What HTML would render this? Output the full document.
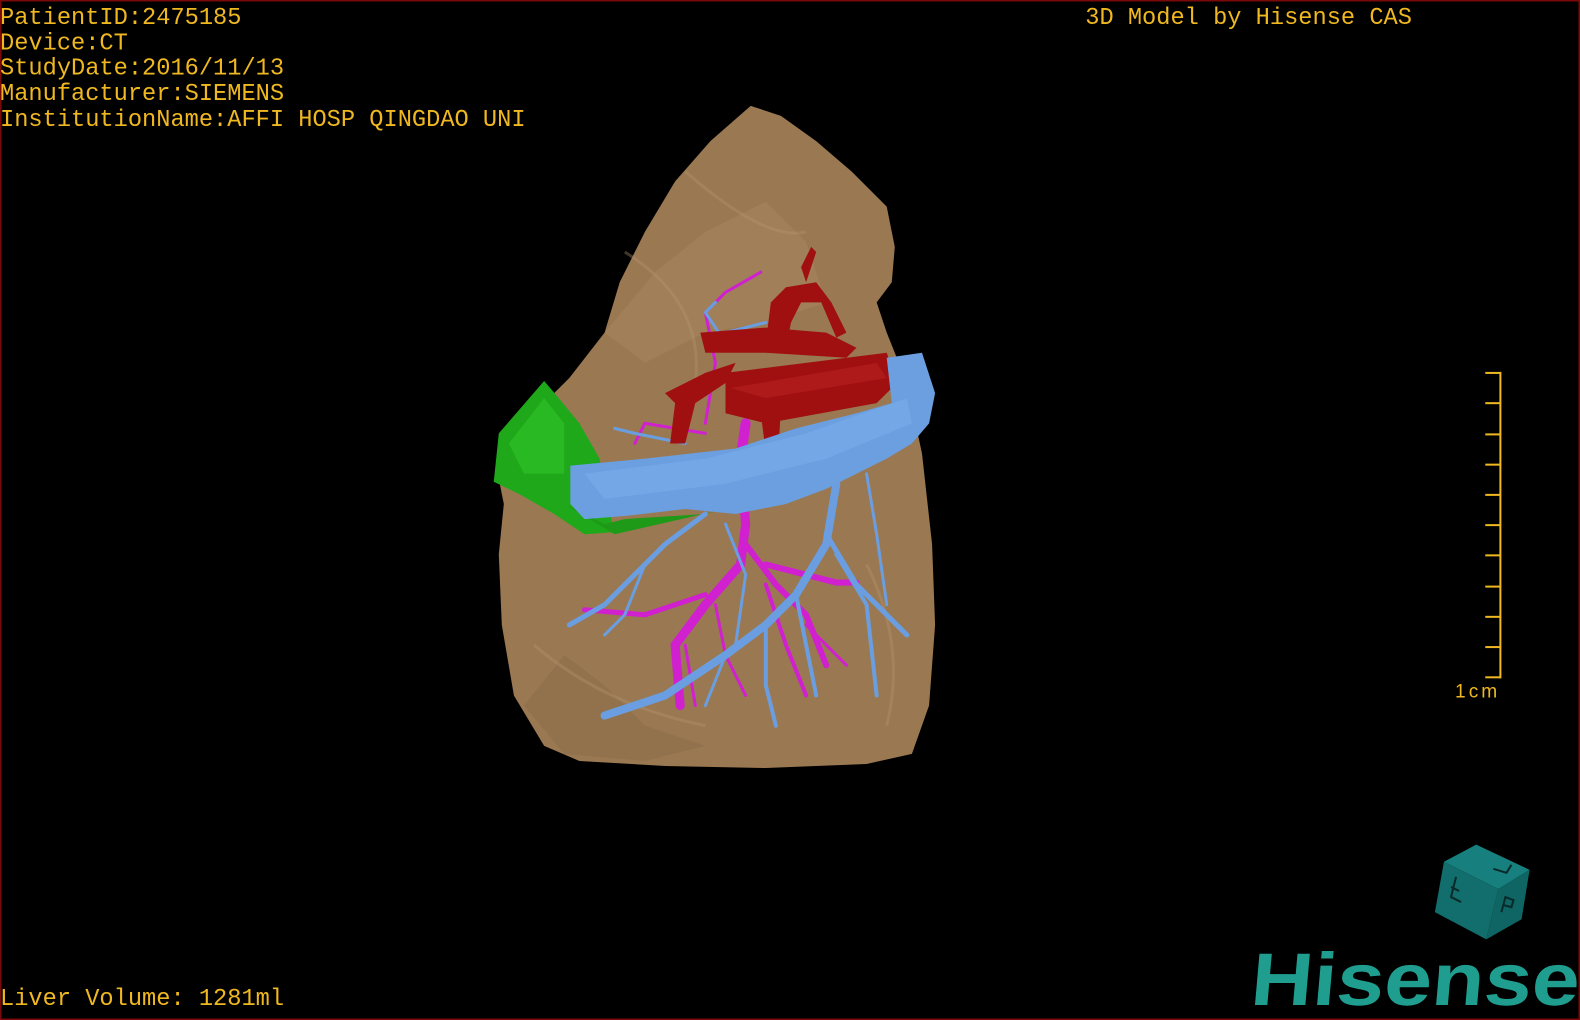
<!DOCTYPE html>
<html><head><meta charset="utf-8"><style>
html,body{margin:0;padding:0;background:#000;width:1580px;height:1020px;overflow:hidden}
svg{display:block}
</style></head><body>
<svg width="1580" height="1020" viewBox="0 0 1568 1012" preserveAspectRatio="none" xmlns="http://www.w3.org/2000/svg">
<rect x="0" y="0" width="1568" height="1012" fill="#000"/>
<rect x="0.5" y="0.5" width="1567" height="1011" fill="none" stroke="#7a0a0a" stroke-width="2"/>
<g font-family="Liberation Mono, monospace" font-size="23.5" fill="#f0b820">
<text x="0" y="24">PatientID:2475185</text>
<text x="0" y="49">Device:CT</text>
<text x="0" y="74">StudyDate:2016/11/13</text>
<text x="0" y="99">Manufacturer:SIEMENS</text>
<text x="0" y="125">InstitutionName:AFFI HOSP QINGDAO UNI</text>
<text x="1077" y="24">3D Model by Hisense CAS</text>
<text x="0" y="997">Liver Volume: 1281ml</text>
<text x="1444" y="692" font-size="19" letter-spacing="3" font-family="Liberation Sans, sans-serif">1cm</text>
</g>
<g stroke="#f0b820" stroke-width="2">
<line x1="1489" y1="369" x2="1489" y2="673"/>
<line x1="1474" y1="370" x2="1489" y2="370"/>
<line x1="1474" y1="400" x2="1489" y2="400"/>
<line x1="1474" y1="431" x2="1489" y2="431"/>
<line x1="1474" y1="461" x2="1489" y2="461"/>
<line x1="1474" y1="491" x2="1489" y2="491"/>
<line x1="1474" y1="521" x2="1489" y2="521"/>
<line x1="1474" y1="551" x2="1489" y2="551"/>
<line x1="1474" y1="582" x2="1489" y2="582"/>
<line x1="1474" y1="612" x2="1489" y2="612"/>
<line x1="1474" y1="642" x2="1489" y2="642"/>
<line x1="1474" y1="672" x2="1489" y2="672"/>
</g>
<path d="M745 105 L775 115 L810 140 L845 170 L880 205 L888 245 L885 280 L870 300 L880 330 L900 380 L915 450 L925 540 L928 620 L922 700 L905 748 L860 758 L760 762 L660 760 L575 755 L540 740 L510 690 L498 620 L495 550 L500 500 L493 465 L505 430 L540 400 L565 375 L600 330 L615 280 L640 230 L670 180 L705 140 Z" fill="#9a7852"/>
<path d="M600 330 L650 270 L700 230 L760 200 L800 240 L820 300 L760 320 L700 330 L640 360 Z" fill="#a58560" opacity="0.5"/>
<path d="M520 700 L560 650 L600 680 L640 720 L700 740 L640 755 L560 748 Z" fill="#8a6a48" opacity="0.5"/>
<g stroke="#b89870" stroke-width="3" fill="none" opacity="0.35">
<path d="M620 250 Q700 300 690 380"/><path d="M680 170 Q760 240 800 230"/><path d="M530 640 Q600 700 700 720"/><path d="M860 560 Q900 640 880 720"/>
</g>
<path d="M495 430 L540 378 L552 392 L575 420 L595 455 L600 490 L610 528 L580 530 L550 510 L515 490 L490 478 Z" fill="#1ea81a"/>
<path d="M505 440 L540 395 L560 420 L560 470 L520 470 Z" fill="#2cc028" opacity="0.7"/>
<path d="M560 500 L600 520 L620 515 L700 510 L720 505 L610 530 Z" fill="#1e9a18"/>
<g stroke="#d020d0" fill="none" stroke-linecap="round">
<path d="M735 460 L740 520 L735 560 L700 600 L670 640 L675 700" stroke-width="9"/>
<path d="M740 540 L770 580 L800 610 L820 660" stroke-width="6"/>
<path d="M700 590 L640 610 L580 605" stroke-width="5"/>
<path d="M760 560 L830 578 L850 578" stroke-width="6"/>
<path d="M760 580 L780 640 L800 690" stroke-width="4"/>
<path d="M680 640 L690 700" stroke-width="3"/>
<path d="M710 600 L720 650 L740 690" stroke-width="3"/>
<path d="M700 430 L640 420 L630 440" stroke-width="3"/>
<path d="M700 420 L710 360 L700 310 L720 290 L755 270" stroke-width="3"/>
<path d="M740 420 L735 455" stroke-width="10"/>
<path d="M800 620 L840 660" stroke-width="3"/>
</g>
<g stroke="#6a9ee0" fill="none" stroke-linecap="round">
<path d="M830 480 L820 540 L790 590 L760 620 L720 650 L660 690 L600 710" stroke-width="8"/>
<path d="M820 530 L850 580 L880 610 L900 630" stroke-width="5"/>
<path d="M790 590 L800 640 L810 690" stroke-width="4"/>
<path d="M760 620 L760 680 L770 720" stroke-width="4"/>
<path d="M720 650 L700 700" stroke-width="3"/>
<path d="M830 550 L860 600 L870 690" stroke-width="4"/>
<path d="M700 510 L660 540 L620 580 L600 600 L565 620" stroke-width="5"/>
<path d="M640 560 L620 610 L600 630" stroke-width="3"/>
<path d="M720 520 L740 570 L730 640" stroke-width="3"/>
<path d="M860 470 L870 530 L880 600" stroke-width="3"/>
<path d="M680 440 L630 430 L610 425" stroke-width="3"/>
<path d="M720 340 L700 310 L710 300" stroke-width="3"/>
<path d="M760 320 L720 330" stroke-width="3"/>
</g>
<g fill="#a01010" stroke="none">
<path d="M720 370 L880 350 L890 380 L870 400 L760 420 L720 410 Z"/>
<path d="M695 330 L760 325 L820 330 L850 345 L840 355 L760 350 L700 350 Z"/>
<path d="M760 340 L765 300 L780 285 L810 280 L825 300 L840 330 L830 335 L815 300 L795 300 L785 320 L780 345 Z"/>
<path d="M660 390 L700 370 L730 360 L720 380 L690 400 L680 440 L665 440 L670 400 Z"/>
<path d="M755 410 L775 405 L772 455 L762 465 Z"/>
<path d="M795 265 L805 245 L810 250 L800 280 Z"/>
</g>
<path d="M725 385 L870 360 L880 375 L760 395 Z" fill="#b82020" opacity="0.6"/>
<path d="M566 462 L640 455 L730 445 L790 425 L850 410 L885 400 L880 355 L915 350 L928 390 L922 420 L905 440 L880 455 L850 470 L820 485 L780 500 L730 510 L680 505 L620 512 L580 515 L566 500 Z" fill="#6b9fe0"/>
<path d="M580 470 L700 455 L800 430 L900 395 L905 420 L820 455 L720 480 L600 495 Z" fill="#7aaeea" opacity="0.6"/>
<g>
<polygon points="1433,855 1465,838 1518,863 1487,882" fill="#17807e"/>
<polygon points="1433,855 1487,882 1475,932 1424,905" fill="#126e6c"/>
<polygon points="1487,882 1518,863 1510,912 1475,932" fill="#0f6563"/>
<g stroke="#0a2a2a" stroke-width="2" fill="none">
<path d="M1445 870 L1440 890 L1450 895 M1440 880 L1448 884"/>
<path d="M1482 862 L1495 866 L1500 858"/>
<path d="M1490 905 L1494 890 L1502 893 L1500 900 L1492 898"/>
</g>
</g>
<text x="1240" y="997" font-family="Liberation Sans, sans-serif" font-weight="bold" font-size="74" fill="#1f9e90" textLength="326" lengthAdjust="spacingAndGlyphs" transform="skewX(-5) translate(87 0)">Hisense</text>
</svg>
</body></html>
